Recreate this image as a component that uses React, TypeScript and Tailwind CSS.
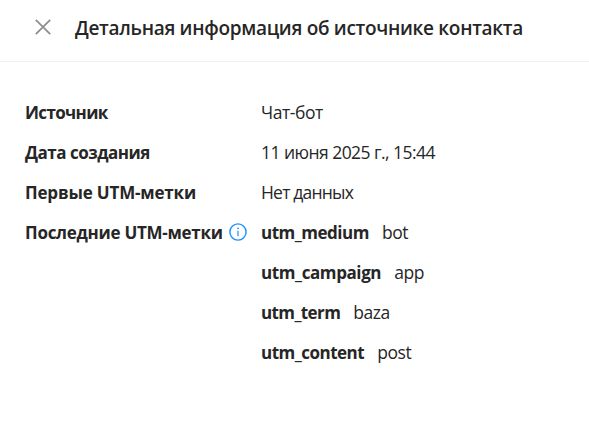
const sourceInfo = [
  { label: "Источник", value: "Чат-бот", labelClass: "tracking-[-0.65px]", valueClass: "tracking-[-0.45px]" },
  { label: "Дата создания", value: "11 июня 2025 г., 15:44", labelClass: "tracking-[-0.48px]", valueClass: "tracking-[-0.54px]" },
  { label: "Первые UTM-метки", value: "Нет данных", labelClass: "tracking-[-0.18px]", valueClass: "tracking-[-0.8px]" },
]

const utmTags = [
  { name: "utm_medium", value: "bot", nameClass: "tracking-[-0.48px]" },
  { name: "utm_campaign", value: "app", nameClass: "tracking-[-0.4px]" },
  { name: "utm_term", value: "baza", nameClass: "tracking-[-0.6px]" },
  { name: "utm_content", value: "post", nameClass: "tracking-[-0.5px]" },
]

const CloseIcon = () => (
  <svg className="h-4 w-4" viewBox="0 0 16 16" fill="none" stroke="#8c8c8c" strokeWidth="1.7">
    <path d="M.8.8L15.2 15.2M15.2.8L.8 15.2" />
  </svg>
)

const InfoIcon = () => (
  <svg className="h-[18px] w-[18px]" viewBox="0 0 18 18" fill="none" stroke="#1890ff" strokeWidth="1.4">
    <circle cx="9" cy="9" r="8.1" />
    <path d="M9 7.7v5.6" strokeWidth="1.2" />
    <circle cx="9" cy="5.3" r=".9" fill="#1890ff" stroke="none" />
  </svg>
)

export default function App() {
  return (
    <div className="h-screen overflow-hidden bg-white font-['Open_Sans','Noto_Sans',sans-serif] text-[17.5px] text-[#262626]">
      <header className="flex h-[62px] items-center border-b border-[#f0f0f0] pb-2 pl-[35px]">
        <button type="button"><CloseIcon /></button>
        <h1 className="ml-6 whitespace-nowrap pt-1 text-[19px] font-semibold tracking-[-0.3px]">Детальная информация об источнике контакта</h1>
      </header>
      <main className="pl-[25px] pt-[30px]">
        {sourceInfo.map((row) => (
          <div key={row.label} className="flex h-10 items-baseline whitespace-nowrap pt-[7px]">
            <span className={`w-[236px] text-[17px] font-bold ${row.labelClass}`}>{row.label}</span>
            <span className={row.valueClass}>{row.value}</span>
          </div>
        ))}
        <div className="flex whitespace-nowrap">
          <div className="flex h-10 w-[236px] items-center text-[17px] font-bold tracking-[-0.28px]">
            <span className="w-[203.5px] pt-px">Последние UTM-метки</span>
            <InfoIcon />
          </div>
          <div>
            {utmTags.map((tag) => (
              <div key={tag.name} className="flex h-10 items-baseline gap-[13px] pt-[7px]">
                <span className={`text-[17px] font-bold ${tag.nameClass}`}>{tag.name}</span>
                <span className="tracking-[-0.45px]">{tag.value}</span>
              </div>
            ))}
          </div>
        </div>
      </main>
    </div>
  )
}
